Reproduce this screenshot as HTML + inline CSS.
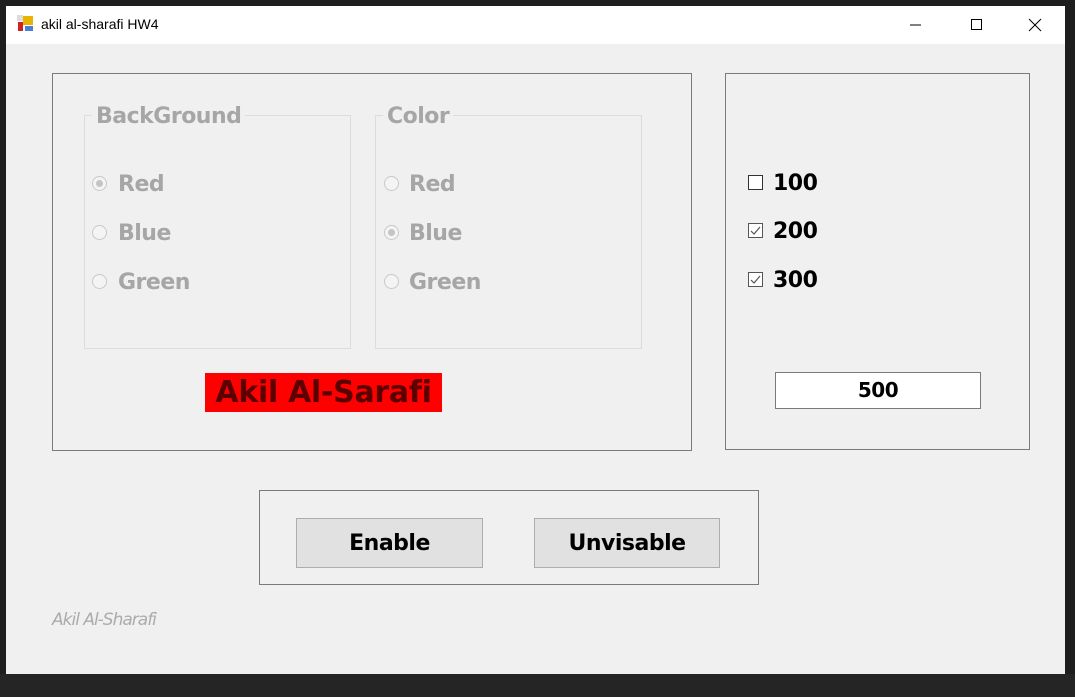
<!DOCTYPE html><html><head><style>
body{margin:0;width:1075px;height:697px;background:#1e1e1e;position:relative;overflow:hidden;font-family:"DejaVu Sans","Liberation Sans",sans-serif}
.a{position:absolute;box-sizing:border-box}
.t{font-weight:bold;font-size:22px;letter-spacing:-0.5px;white-space:nowrap}
.g{color:#a6a6a6}
.rad{width:15px;height:15px;border:1px solid #c8c8c8;border-radius:50%;background:#f4f4f4}
.rad.on::after{content:"";position:absolute;left:3px;top:3px;width:7px;height:7px;border-radius:50%;background:#c4c4c4}
.cb{width:15px;height:15px;border:1px solid #333;background:#fff}
</style></head><body>
<div class="a" style="left:0;top:674px;width:1075px;height:23px;background:#252526"></div>
<div class="a" style="left:6px;top:6px;width:1059px;height:668px;background:#f0f0f0"></div>
<div class="a" style="left:6px;top:6px;width:1059px;height:38px;background:#fff"></div>
<svg class="a" style="left:17px;top:15px" width="18" height="18"><rect x="0" y="0" width="6" height="6" fill="#ddd"/><rect x="6" y="1" width="10" height="9" fill="#e8b400"/><rect x="1" y="7" width="5" height="9" fill="#c22"/><rect x="8" y="11" width="8" height="5" fill="#4a7fd6"/></svg>
<div class="a" style="left:41px;top:16px;font-family:'Liberation Sans',sans-serif;font-size:14px;color:#000">akil al-sharafi HW4</div>
<svg class="a" style="left:900px;top:15px" width="150" height="20"><line x1="10" y1="10" x2="21" y2="10" stroke="#000"/><rect x="71.5" y="4.5" width="10" height="10" fill="none" stroke="#000"/><path d="M129 4L141 16M141 4L129 16" stroke="#000"/></svg>

<div class="a" style="left:52px;top:73px;width:640px;height:378px;border:1px solid #7a7a7a"></div>
<div class="a" style="left:84px;top:115px;width:267px;height:234px;border:1px solid #dcdcdc"></div>
<div class="a t g" style="left:92px;top:104px;background:#f0f0f0;padding:0 4px">BackGround</div>
<div class="a" style="left:375px;top:115px;width:267px;height:234px;border:1px solid #dcdcdc"></div>
<div class="a t g" style="left:383px;top:104px;background:#f0f0f0;padding:0 4px">Color</div>

<div class="a rad on" style="left:92px;top:176px"></div><div class="a t g" style="left:118px;top:172px">Red</div>
<div class="a rad" style="left:92px;top:225px"></div><div class="a t g" style="left:118px;top:221px">Blue</div>
<div class="a rad" style="left:92px;top:274px"></div><div class="a t g" style="left:118px;top:270px">Green</div>
<div class="a rad" style="left:384px;top:176px"></div><div class="a t g" style="left:409px;top:172px">Red</div>
<div class="a rad on" style="left:384px;top:225px"></div><div class="a t g" style="left:409px;top:221px">Blue</div>
<div class="a rad" style="left:384px;top:274px"></div><div class="a t g" style="left:409px;top:270px">Green</div>

<div class="a" style="left:205px;top:373px;width:237px;height:39px;background:#ff0000;color:#5a0000;font-weight:bold;font-size:30px;text-align:center;line-height:39px;letter-spacing:-0.3px">Akil Al-Sarafi</div>

<div class="a" style="left:725px;top:73px;width:305px;height:377px;border:1px solid #7a7a7a"></div>
<div class="a cb" style="left:748px;top:175px"></div><div class="a t" style="left:773px;top:171px">100</div>
<div class="a cb" style="left:748px;top:223px;border-color:#555"><svg width="13" height="13" style="position:absolute"><path d="M2 7L5 10L11 3" stroke="#555" fill="none" stroke-width="1.2"/></svg></div><div class="a t" style="left:773px;top:219px">200</div>
<div class="a cb" style="left:748px;top:272px;border-color:#555"><svg width="13" height="13" style="position:absolute"><path d="M2 7L5 10L11 3" stroke="#555" fill="none" stroke-width="1.2"/></svg></div><div class="a t" style="left:773px;top:268px">300</div>
<div class="a t" style="left:775px;top:372px;width:206px;height:37px;border:1px solid #7a7a7a;background:#fff;text-align:center;line-height:35px;font-size:20px">500</div>

<div class="a" style="left:259px;top:490px;width:500px;height:95px;border:1px solid #7a7a7a"></div>
<div class="a t" style="left:296px;top:518px;width:187px;height:50px;border:1px solid #adadad;background:#e1e1e1;text-align:center;line-height:50px">Enable</div>
<div class="a t" style="left:534px;top:518px;width:186px;height:50px;border:1px solid #adadad;background:#e1e1e1;text-align:center;line-height:50px">Unvisable</div>

<div class="a" style="left:52px;top:610px;font-style:italic;color:#ababab;font-size:17px;letter-spacing:-1px">Akil Al-Sharafi</div>
</body></html>
